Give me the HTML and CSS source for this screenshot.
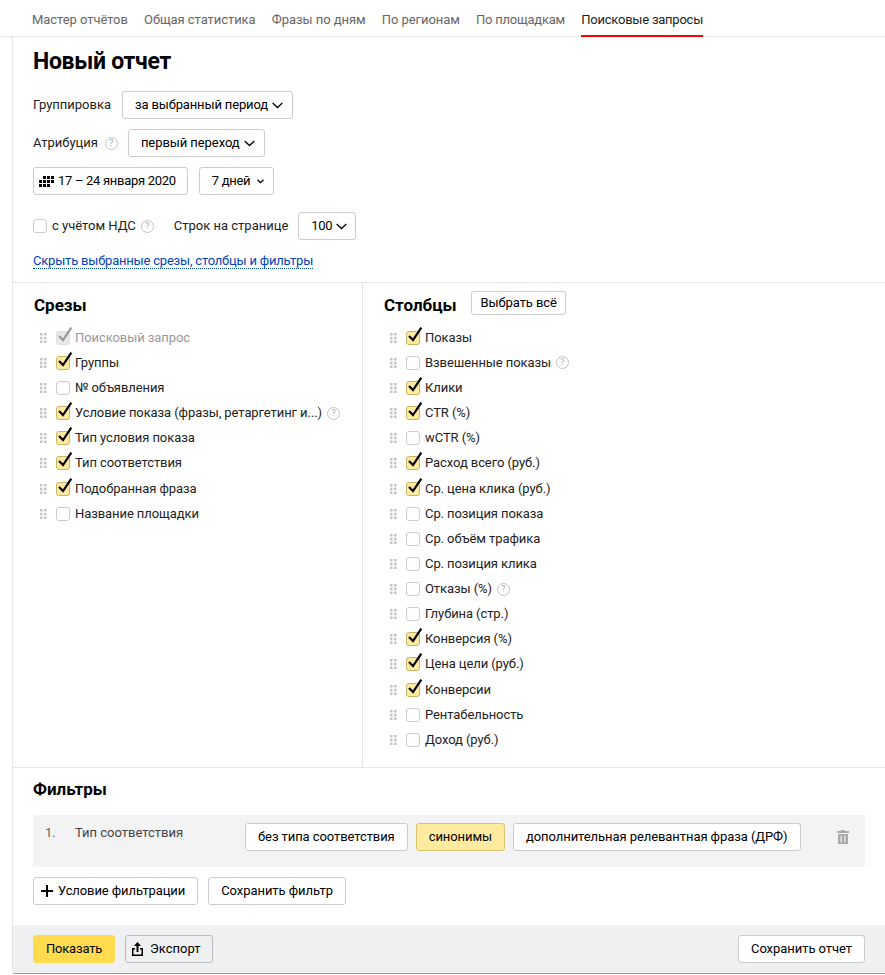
FILE: index.html
```html
<!DOCTYPE html>
<html lang="ru">
<head>
<meta charset="utf-8">
<title>Новый отчет</title>
<link rel="stylesheet" href="styles.css">
</head>
<body>
<svg class="defs" width="0" height="0" aria-hidden="true">
  <defs>
    <symbol id="drag" viewBox="0 0 7 10"><path d="M0 0h2.500v2.500H0zM4 0h2.500v2.500H4zM0 3.700h2.500v2.500H0zM4 3.700h2.500v2.500H4zM0 7.400h2.500v2.500H0zM4 7.400h2.500v2.500H4z"/></symbol>
    <symbol id="check" viewBox="0 0 18 18"><path d="M3 10 7 14 15.300 1.700" fill="none" stroke="currentColor" stroke-width="2.200"/></symbol>
    <symbol id="chev" viewBox="0 0 11 7"><path d="M.7 1 5.500 5.500 10.300 1" fill="none" stroke="currentColor" stroke-width="1.300"/></symbol>
    <symbol id="chev-small" viewBox="0 0 7 5"><path d="M.5 .7 3.500 3.700 6.500 .7" fill="none" stroke="currentColor" stroke-width="1.300"/></symbol>
  </defs>
</svg>
<nav class="tabs">
  <a class="tab">Мастер отчётов</a>
  <a class="tab">Общая статистика</a>
  <a class="tab">Фразы по дням</a>
  <a class="tab">По регионам</a>
  <a class="tab tab-tight">По площадкам</a>
  <a class="tab tab-tight tab-active">Поисковые запросы</a>
</nav>
<main class="panel">
  <section class="settings">
    <h1 class="title">Новый отчет</h1>
    <div class="row">
      <span class="label">Группировка</span>
      <button class="btn btn-select btn-group">за выбранный период <svg class="chev"><use href="#chev"/></svg></button>
    </div>
    <div class="row">
      <span class="label">Атрибуция</span><span class="help help-attr">?</span>
      <button class="btn btn-select btn-attr">первый переход <svg class="chev"><use href="#chev"/></svg></button>
    </div>
    <div class="row">
      <button class="btn btn-date">
        <svg class="cal" viewBox="0 0 15 11" width="15" height="11"><path d="M4 0h3v3H4zM8 0h3v3H8zM12 0h3v3h-3zM0 4h3v3H0zM4 4h3v3H4zM8 4h3v3H8zM12 4h3v3h-3zM0 8h3v3H0zM4 8h3v3H4zM8 8h3v3H8z"/></svg>
        <span class="date-text">17 – 24 января 2020</span>
      </button>
      <button class="btn btn-select btn-days">7 дней <svg class="chev-small"><use href="#chev-small"/></svg></button>
    </div>
    <div class="row row-vat">
      <span class="box"></span>
      <span class="label label-vat">с учётом НДС</span><span class="help">?</span>
      <span class="label label-lines">Строк на странице</span>
      <button class="btn btn-select btn-lines">100 <svg class="chev"><use href="#chev"/></svg></button>
    </div>
    <a class="toggle">Скрыть выбранные срезы, столбцы и фильтры</a>
  </section>

  <section class="lists">
    <div class="col col-left">
      <div class="col-head">
        <h2 class="subtitle subtitle-head">Срезы</h2>
      </div>
      <ul class="list">
        <li class="item item-disabled"><svg class="drag"><use href="#drag"/></svg><span class="box box-disabled"><svg class="tick"><use href="#check"/></svg></span>Поисковый запрос</li>
        <li class="item"><svg class="drag"><use href="#drag"/></svg><span class="box box-on"><svg class="tick"><use href="#check"/></svg></span>Группы</li>
        <li class="item"><svg class="drag"><use href="#drag"/></svg><span class="box"></span>№ объявления</li>
        <li class="item"><svg class="drag"><use href="#drag"/></svg><span class="box box-on"><svg class="tick"><use href="#check"/></svg></span>Условие показа (фразы, ретаргетинг и...)<span class="help help-item">?</span></li>
        <li class="item"><svg class="drag"><use href="#drag"/></svg><span class="box box-on"><svg class="tick"><use href="#check"/></svg></span>Тип условия показа</li>
        <li class="item"><svg class="drag"><use href="#drag"/></svg><span class="box box-on"><svg class="tick"><use href="#check"/></svg></span>Тип соответствия</li>
        <li class="item"><svg class="drag"><use href="#drag"/></svg><span class="box box-on"><svg class="tick"><use href="#check"/></svg></span>Подобранная фраза</li>
        <li class="item"><svg class="drag"><use href="#drag"/></svg><span class="box"></span>Название площадки</li>
      </ul>
    </div>
    <div class="col col-right">
      <div class="col-head">
        <h2 class="subtitle subtitle-head">Столбцы</h2>
        <button class="btn btn-all">Выбрать всё</button>
      </div>
      <ul class="list">
        <li class="item"><svg class="drag"><use href="#drag"/></svg><span class="box box-on"><svg class="tick"><use href="#check"/></svg></span>Показы</li>
        <li class="item"><svg class="drag"><use href="#drag"/></svg><span class="box"></span>Взвешенные показы<span class="help help-item">?</span></li>
        <li class="item"><svg class="drag"><use href="#drag"/></svg><span class="box box-on"><svg class="tick"><use href="#check"/></svg></span>Клики</li>
        <li class="item"><svg class="drag"><use href="#drag"/></svg><span class="box box-on"><svg class="tick"><use href="#check"/></svg></span>CTR (%)</li>
        <li class="item"><svg class="drag"><use href="#drag"/></svg><span class="box"></span>wCTR (%)</li>
        <li class="item"><svg class="drag"><use href="#drag"/></svg><span class="box box-on"><svg class="tick"><use href="#check"/></svg></span>Расход всего (руб.)</li>
        <li class="item"><svg class="drag"><use href="#drag"/></svg><span class="box box-on"><svg class="tick"><use href="#check"/></svg></span>Ср. цена клика (руб.)</li>
        <li class="item"><svg class="drag"><use href="#drag"/></svg><span class="box"></span>Ср. позиция показа</li>
        <li class="item"><svg class="drag"><use href="#drag"/></svg><span class="box"></span>Ср. объём трафика</li>
        <li class="item"><svg class="drag"><use href="#drag"/></svg><span class="box"></span>Ср. позиция клика</li>
        <li class="item"><svg class="drag"><use href="#drag"/></svg><span class="box"></span>Отказы (%)<span class="help help-item">?</span></li>
        <li class="item"><svg class="drag"><use href="#drag"/></svg><span class="box"></span>Глубина (стр.)</li>
        <li class="item"><svg class="drag"><use href="#drag"/></svg><span class="box box-on"><svg class="tick"><use href="#check"/></svg></span>Конверсия (%)</li>
        <li class="item"><svg class="drag"><use href="#drag"/></svg><span class="box box-on"><svg class="tick"><use href="#check"/></svg></span>Цена цели (руб.)</li>
        <li class="item"><svg class="drag"><use href="#drag"/></svg><span class="box box-on"><svg class="tick"><use href="#check"/></svg></span>Конверсии</li>
        <li class="item"><svg class="drag"><use href="#drag"/></svg><span class="box"></span>Рентабельность</li>
        <li class="item"><svg class="drag"><use href="#drag"/></svg><span class="box"></span>Доход (руб.)</li>
      </ul>
    </div>
  </section>

  <section class="filters">
    <h2 class="subtitle">Фильтры</h2>
    <div class="filter-box">
      <span class="filter-num">1.</span>
      <span class="filter-name">Тип соответствия</span>
      <div class="filter-opts">
        <button class="btn btn-opt">без типа соответствия</button>
        <button class="btn btn-opt btn-picked">синонимы</button>
        <button class="btn btn-opt btn-long">дополнительная релевантная фраза (ДРФ)</button>
      </div>
      <svg class="trash" viewBox="0 0 12 14" width="12" height="14"><path d="M4 0h4v1h4v2H0V1h4zM1 4h10v10H1zM3.500 5.500v7h1.200v-7zM7.300 5.500v7h1.200v-7z" fill-rule="evenodd"/></svg>
    </div>
    <div class="filter-actions">
      <button class="btn btn-add"><svg class="plus" viewBox="0 0 12 12" width="12" height="12"><path d="M5 0h2v5h5v2H7v5H5V7H0V5h5z"/></svg>Условие фильтрации</button>
      <button class="btn btn-tight">Сохранить фильтр</button>
    </div>
  </section>

  <footer class="footer">
    <button class="btn btn-show">Показать</button>
    <button class="btn btn-export"><svg class="export" viewBox="0 0 11 14" width="11" height="14"><path d="M5.500 0 9 4H6.500v6h-2V4H2zM0 6h3v1.500H1.500v5h8v-5H8V6h3v8H0z"/></svg>Экспорт</button>
    <button class="btn btn-save">Сохранить отчет</button>
  </footer>
</main>
</body>
</html>
```

FILE: styles.css
```css
* { box-sizing: border-box; }
html, body { margin: 0; padding: 0; }
body {
  width: 885px;
  height: 975px;
  overflow: hidden;
  background: #fff;
  color: #000;
  font-family: Roboto, "Liberation Sans", sans-serif;
  font-size: 13px;
  line-height: 16px;
}
.defs { position: absolute; }

.tabs {
  display: flex;
  gap: 16.200px;
  height: 37px;
  padding: 12px 0 0 32px;
  border-bottom: 1px solid #e5e5e5;
}
.tab { color: #666; height: 25px; letter-spacing: -0.06px; }
.tab-tight { letter-spacing: -0.23px; }
.tab-active { color: #222; border-bottom: 2px solid #f00; }

.panel {
  margin-left: 12px;
  height: 937px;
  border-left: 1px solid #e5e5e5;
  border-bottom: 1px solid #999;
  border-bottom-left-radius: 3px;
}

.settings { height: 246px; padding: 11px 0 0 20px; border-bottom: 1px solid #e5e5e5; }
.title { margin: 0 0 15px; font-size: 23px; line-height: 28px; font-weight: 700; letter-spacing: -0.3px; }
.row { display: flex; align-items: center; height: 28px; margin-bottom: 10px; }
.row-vat { margin: 17px 0 13px; }
.label { color: #222; }

.btn {
  display: inline-flex;
  align-items: center;
  justify-content: center;
  height: 28px;
  padding: 0 12px;
  border: 1px solid #ccc;
  border-radius: 3px;
  background: #fff;
  color: #000;
  font: inherit;
  white-space: nowrap;
}
.btn-select { gap: 4px; margin-left: 10px; padding: 0 9px 0 12px; }
.btn-group { margin-left: 11px; letter-spacing: -0.15px; }
.btn-attr { letter-spacing: -0.07px; }
.btn-lines { letter-spacing: -0.3px; padding-right: 8px; }
.btn-date { padding: 0 11px 0 5px; gap: 4px; }
.date-text { letter-spacing: -0.3px; }
.btn-days { margin-left: 11px; letter-spacing: -0.3px; gap: 7px; }
.chev { width: 11px; height: 7px; }
.chev-small { width: 7px; height: 5px; }
.cal { fill: #000; }

.help {
  display: inline-flex;
  align-items: center;
  justify-content: center;
  width: 13px;
  height: 13px;
  margin-left: 5px;
  border: 1px solid #c4c4c4;
  border-radius: 50%;
  color: #aaa;
  font-size: 9px;
  line-height: 1;
}
.help-attr { margin-left: 7px; }
.help-item { margin-left: 5px; }
.label-vat { margin-left: 5px; }
.label-lines { margin-left: 20px; }

.box {
  position: relative;
  display: inline-block;
  flex: none;
  width: 14px;
  height: 14px;
  border: 1px solid #ccc;
  border-radius: 3px;
  background: #fff;
}
.box-on { background: #ffeba0; border-color: #c8b568; }
.box-disabled { background: #e8e8e8; border-color: #e0e0e0; }
.tick {
  position: absolute;
  left: -1px;
  top: -6px;
  width: 18px;
  height: 18px;
  color: #000;
  overflow: visible;
}
.box-disabled .tick { color: #999; }

.toggle {
  display: inline-block;
  color: #04b;
  line-height: 15px;
  letter-spacing: -0.2px;
  border-bottom: 1px dotted #04b;
}

.lists { display: flex; height: 485px; border-bottom: 1px solid #e5e5e5; }
.col { padding-top: 8px; }
.col-left { width: 350px; padding-left: 21px; border-right: 1px solid #e5e5e5; }
.col-right { flex: 1; padding-left: 21px; }
.col-head { display: flex; align-items: center; gap: 14.500px; height: 24px; }
.subtitle { margin: 0; font-size: 17px; line-height: 24px; font-weight: 700; }
.subtitle-head { margin-top: 3px; }
.btn-all { height: 24px; padding: 0 8.500px; letter-spacing: -0.1px; }

.list { margin: 10.200px 0 0; padding: 0; list-style: none; }
.item { display: flex; align-items: center; height: 25.140px; color: #222; letter-spacing: -0.08px; white-space: nowrap; }
.item-disabled { color: #999; }
.drag { width: 7px; height: 10px; margin: 0 9px 0 6px; fill: #c4c4c4; flex: none; }
.item .box { margin-right: 5px; }
.item .help { letter-spacing: 0; }

.filters { height: 157px; padding: 9px 20px 0; }
.filter-box {
  display: flex;
  align-items: flex-start;
  height: 52px;
  margin-top: 14px;
  padding: 8px 0 0 12px;
  background: #f3f3f3;
}
.filter-num { width: 30px; color: #666; padding-top: 2px; }
.filter-name { width: 170px; color: #444; padding-top: 2px; }
.filter-opts { display: flex; gap: 8px; }
.btn-opt { padding: 0 12px; letter-spacing: -0.08px; }
.btn-long { letter-spacing: -0.07px; }
.btn-picked { background: #ffeba0; border-color: #d9c46e; }
.trash { margin: 7px 0 0 36px; fill: #aaa; }
.filter-actions { display: flex; gap: 10px; margin-top: 10px; }
.btn-add { gap: 5px; padding: 0 12px 0 7px; letter-spacing: -0.1px; }
.btn-tight { letter-spacing: -0.05px; }
.plus { fill: #000; }

.footer {
  display: flex;
  align-items: center;
  gap: 10px;
  height: 48px;
  padding: 0 20px;
  background: #eff0f2;
}
.btn-show { background: #ffdb4d; border-color: #ffdb4d; letter-spacing: -0.2px; }
.btn-export { gap: 7px; padding: 0 11px 0 6px; background: transparent; border-color: #bbb; }
.export { fill: #000; }
.btn-save { margin-left: auto; letter-spacing: -0.05px; }
```
